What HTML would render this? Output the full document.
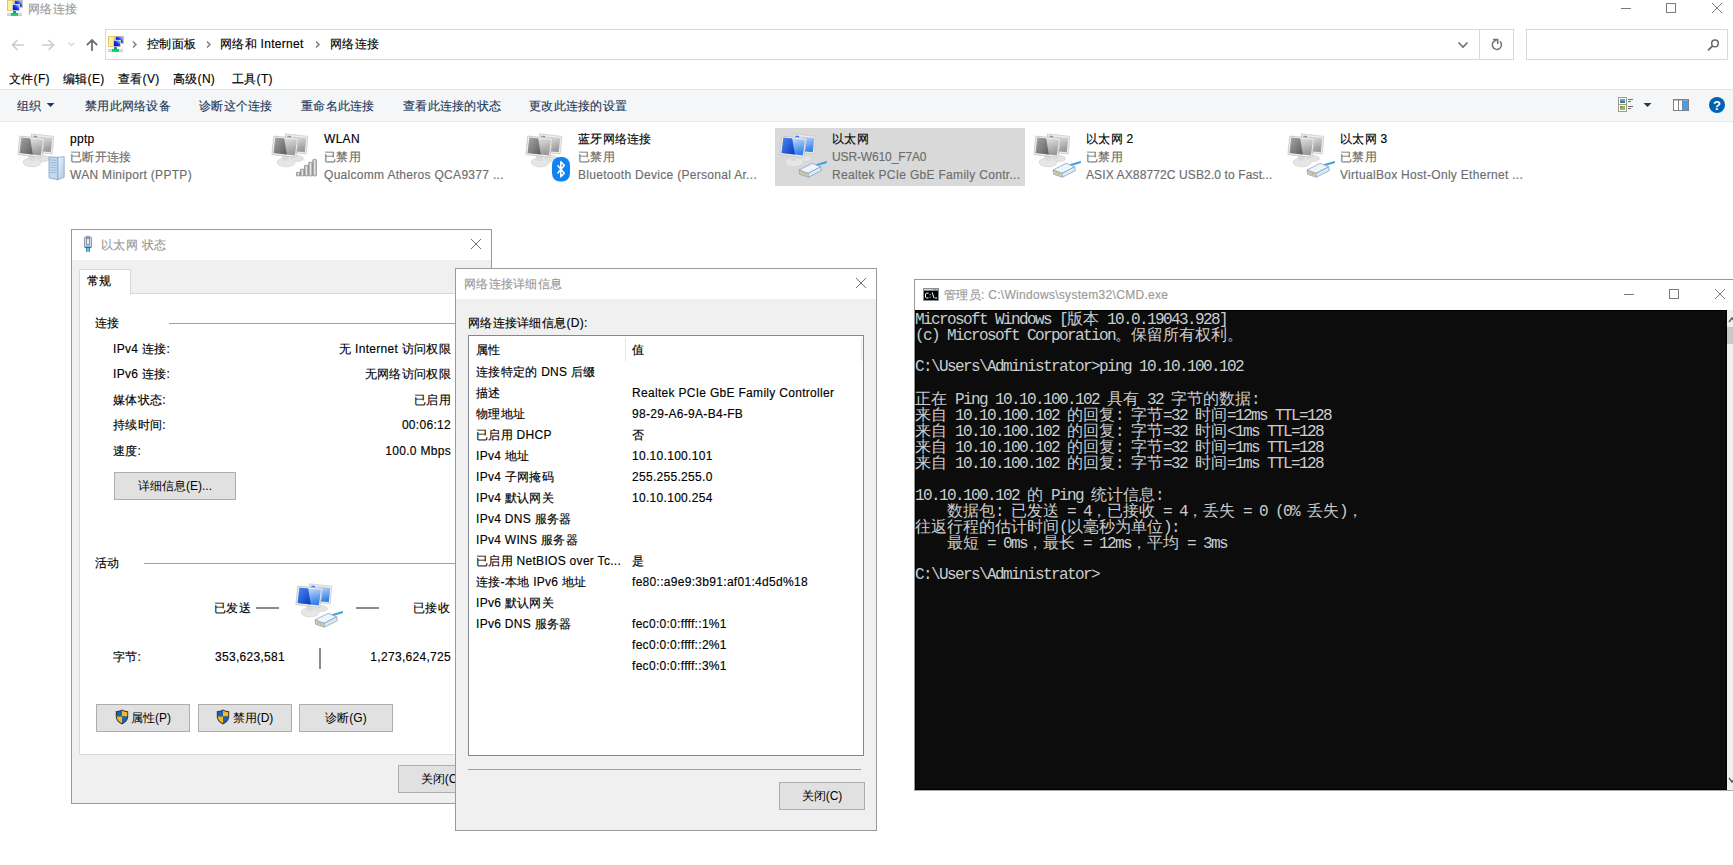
<!DOCTYPE html>
<html><head><meta charset="utf-8">
<style>
html,body{margin:0;padding:0}
body{width:1733px;height:865px;overflow:hidden;background:#fff;position:relative;font-family:"Liberation Sans",sans-serif;font-size:12px;color:#000}
.a{position:absolute}
.t{position:absolute;white-space:nowrap;line-height:18px;height:18px;letter-spacing:0.3px;-webkit-text-stroke:0.15px currentColor}
.g{color:#6d6d6d}
.box{position:absolute;box-sizing:border-box}
.btn{position:absolute;box-sizing:border-box;background:#e1e1e1;border:1px solid #adadad;text-align:center;line-height:27px;white-space:nowrap}
.hl{position:absolute;height:1px;background:#a0a0a0}
.cmd{position:absolute;left:915px;white-space:pre;font-family:"Liberation Mono",monospace;font-size:16px;line-height:16px;height:16px;color:#cccccc;letter-spacing:-1.6px}
.cmd b{font-weight:normal;font-family:"Liberation Sans",sans-serif;font-size:16px;letter-spacing:0}
</style></head><body>

<svg width="0" height="0" style="position:absolute">
<defs>
<linearGradient id="gdk" x1="0" y1="0" x2="1" y2="1"><stop offset="0" stop-color="#a8a8a8"/><stop offset="1" stop-color="#5c5c5c"/></linearGradient>
<linearGradient id="glt" x1="0" y1="0" x2="0.4" y2="1"><stop offset="0" stop-color="#f2f2f2"/><stop offset="1" stop-color="#9c9c9c"/></linearGradient>
<linearGradient id="gdkb" x1="0" y1="0" x2="1" y2="1"><stop offset="0" stop-color="#4a8cf0"/><stop offset="1" stop-color="#0838c0"/></linearGradient>
<linearGradient id="gltb" x1="0" y1="0" x2="0.4" y2="1"><stop offset="0" stop-color="#e6f2ff"/><stop offset="1" stop-color="#3a82ea"/></linearGradient>
<linearGradient id="gsrv" x1="0" y1="0" x2="1" y2="1">
<stop offset="0" stop-color="#eef5fc"/><stop offset="1" stop-color="#a9c6e4"/>
</linearGradient>
<linearGradient id="gbar" x1="0" y1="0" x2="1" y2="0">
<stop offset="0" stop-color="#9a9a9a"/><stop offset="0.5" stop-color="#e8e8e8"/><stop offset="1" stop-color="#a8a8a8"/>
</linearGradient>
<symbol id="pcs" viewBox="0 0 56 56">
<ellipse cx="29" cy="30.5" rx="6.5" ry="3" fill="#e4e4e4" stroke="#cfcfcf" stroke-width="0.6"/>
<polygon points="17.5,5.8 39.8,8.4 38.2,25.9 17,24" fill="#eeeeee" stroke="#c4c4c4" stroke-width="0.7"/>
<polygon points="19.3,7.6 38.2,9.9 36.8,24.2 19,22.5" fill="url(#glt)"/>
<polygon points="19.3,7.6 23,8 24,22.9 19,22.5" fill="url(#gdk)"/>
<ellipse cx="18.1" cy="34.3" rx="9" ry="4.6" fill="#e6e6e6" stroke="#d0d0d0" stroke-width="0.6"/>
<polygon points="14,27 21,28 20.5,33 14.5,32.5" fill="#dadada"/>
<polygon points="5.8,8.1 30.4,10.4 27.8,29.4 3.9,26.5" fill="#f0f0f0" stroke="#c2c2c2" stroke-width="0.8"/>
<polygon points="7.3,9.6 29,11.8 26.9,27.6 5.6,25.1" fill="url(#glt)"/>
<polygon points="7.3,9.6 16.2,10.5 18.8,26.4 5.6,25.1" fill="url(#gdk)"/>
</symbol>
<symbol id="pcb" viewBox="0 0 56 56">
<ellipse cx="29" cy="30.5" rx="6.5" ry="3" fill="#e4e4e4" stroke="#cfcfcf" stroke-width="0.6"/>
<polygon points="17.5,5.8 39.8,8.4 38.2,25.9 17,24" fill="#eeeeee" stroke="#c4c4c4" stroke-width="0.7"/>
<polygon points="19.3,7.6 38.2,9.9 36.8,24.2 19,22.5" fill="url(#gltb)"/>
<polygon points="19.3,7.6 23,8 24,22.9 19,22.5" fill="url(#gdkb)"/>
<ellipse cx="18.1" cy="34.3" rx="9" ry="4.6" fill="#e6e6e6" stroke="#d0d0d0" stroke-width="0.6"/>
<polygon points="14,27 21,28 20.5,33 14.5,32.5" fill="#dadada"/>
<polygon points="5.8,8.1 30.4,10.4 27.8,29.4 3.9,26.5" fill="#f0f0f0" stroke="#c2c2c2" stroke-width="0.8"/>
<polygon points="7.3,9.6 29,11.8 26.9,27.6 5.6,25.1" fill="url(#gltb)"/>
<polygon points="7.3,9.6 16.2,10.5 18.8,26.4 5.6,25.1" fill="url(#gdkb)"/>
</symbol>
<symbol id="srv" viewBox="0 0 56 56">
<polygon points="35,28.8 44,29.3 44,51.8 35,49.8" fill="#c4daf0" stroke="#6f93b8" stroke-width="0.7"/>
<polygon points="44,29.3 50.2,28.6 50.2,49.2 44,51.8" fill="url(#gsrv)" stroke="#7fa0c4" stroke-width="0.7"/>
<g stroke="#7f9fc0" stroke-width="0.6"><line x1="36.5" y1="32" x2="42.5" y2="32.3"/><line x1="36.5" y1="34.5" x2="42.5" y2="34.8"/><line x1="36.5" y1="37" x2="42.5" y2="37.3"/><line x1="36.5" y1="39.5" x2="42.5" y2="39.8"/><line x1="36.5" y1="42" x2="42.5" y2="42.3"/><line x1="36.5" y1="44.5" x2="42.5" y2="44.8"/></g>
</symbol>
<symbol id="plug" viewBox="0 0 56 56">
<line x1="41" y1="37" x2="50" y2="34.2" stroke="#3fa3dc" stroke-width="2.2" stroke-linecap="round"/>
<polygon points="23,42 36.2,35.3 44.7,38.8 32,45.4" fill="#eef4fb" stroke="#7d9ab8" stroke-width="0.7"/>
<polygon points="23,42 32,45.4 32.4,49.2 23.6,46.3" fill="#cfe0f0" stroke="#7d9ab8" stroke-width="0.7"/>
<polygon points="32,45.4 44.7,38.8 45.3,42.7 32.4,49.2" fill="#dce9f6" stroke="#7d9ab8" stroke-width="0.7"/>
<g stroke="#c9a52a" stroke-width="0.8"><line x1="25" y1="43.5" x2="25.2" y2="46"/><line x1="26.6" y1="44.1" x2="26.8" y2="46.6"/><line x1="28.2" y1="44.7" x2="28.4" y2="47.2"/><line x1="29.8" y1="45.2" x2="30" y2="47.8"/></g>
</symbol>
<symbol id="bars" viewBox="0 0 56 56">
<g fill="url(#gbar)" stroke="#777" stroke-width="0.6">
<rect x="28.4" y="44.3" width="3.6" height="3.6" rx="0.6"/>
<rect x="32.5" y="41.1" width="3.6" height="6.8" rx="0.6"/>
<rect x="36.6" y="37.3" width="3.6" height="10.6" rx="0.6"/>
<rect x="40.7" y="34.3" width="3.6" height="13.6" rx="0.6"/>
<rect x="44.8" y="31.4" width="3.6" height="16.5" rx="0.6"/>
</g>
</symbol>
<symbol id="bt" viewBox="0 0 56 56">
<rect x="30" y="29" width="18" height="24.5" rx="8" fill="#0f83f0"/>
<path d="M35.5,37.2 L42.3,45.3 L38.8,48.8 L38.8,33.8 L42.3,37.3 L35.5,45.5" fill="none" stroke="#fff" stroke-width="1.6" stroke-linejoin="round"/>
</symbol>
<symbol id="netico" viewBox="0 0 16 16">
<linearGradient id="gnb" x1="0" y1="1" x2="1" y2="0"><stop offset="0" stop-color="#0000c8"/><stop offset="0.55" stop-color="#1a3cf0"/><stop offset="1" stop-color="#c8dcff"/></linearGradient>
<rect x="0" y="0" width="6.8" height="10.9" fill="#e8c25a"/>
<rect x="1" y="0.8" width="4.6" height="9.2" fill="#fbf0a8"/>
<rect x="6.9" y="0" width="9" height="7.8" fill="#b8b8b8"/>
<rect x="8" y="0.9" width="6.8" height="5.8" fill="url(#gnb)"/>
<rect x="5" y="3.9" width="7.9" height="7.2" fill="#d4d4d4"/>
<rect x="5.9" y="4.8" width="6.1" height="5.4" fill="url(#gnb)"/>
<rect x="0" y="12.9" width="15" height="1.2" fill="#d0d4d6"/>
<rect x="0" y="14.6" width="15" height="1.2" fill="#b8bcbe"/>
<rect x="6" y="11.1" width="3" height="2.2" fill="#109850"/>
<rect x="3.9" y="13" width="7.1" height="2.8" fill="#00d070"/>
</symbol>
<symbol id="shield" viewBox="0 0 14 16">
<path d="M7,0.6 C9,1.8 11.2,2.3 13.2,2.3 L13.2,7.5 C13.2,11 10.5,13.8 7,15.4 C3.5,13.8 0.8,11 0.8,7.5 L0.8,2.3 C2.8,2.3 5,1.8 7,0.6 Z" fill="#3a3a3a"/>
<path d="M7,1.6 C8.8,2.6 10.6,3.1 12.2,3.2 L12.2,7.5 L7,7.5 Z" fill="#f5b923"/>
<path d="M7,1.6 C5.2,2.6 3.4,3.1 1.8,3.2 L1.8,7.5 L7,7.5 Z" fill="#1565c0"/>
<path d="M1.8,7.5 L7,7.5 L7,14.3 C4,12.9 1.8,10.5 1.8,7.5 Z" fill="#f5b923"/>
<path d="M12.2,7.5 L7,7.5 L7,14.3 C10,12.9 12.2,10.5 12.2,7.5 Z" fill="#1565c0"/>
</symbol>
</defs>
</svg>

<!-- ================= EXPLORER ================= -->
<div class="box" style="left:775px;top:128px;width:250px;height:58px;background:#d9d9d9"></div>
<!-- icons row -->
<svg class="a" style="left:14px;top:128px" width="56" height="56"><use href="#pcs"/><use href="#srv"/></svg>
<svg class="a" style="left:268px;top:128px" width="56" height="56"><use href="#pcs"/><use href="#bars"/></svg>
<svg class="a" style="left:522px;top:128px" width="56" height="56"><use href="#pcs"/><use href="#bt"/></svg>
<svg class="a" style="left:776px;top:128px" width="56" height="56"><use href="#pcb"/><use href="#plug"/></svg>
<svg class="a" style="left:1030px;top:128px" width="56" height="56"><use href="#pcs"/><use href="#plug"/></svg>
<svg class="a" style="left:1284px;top:128px" width="56" height="56"><use href="#pcs"/><use href="#plug"/></svg>
<!-- title icon -->
<svg class="a" style="left:7px;top:0px" width="16" height="16"><use href="#netico"/></svg>
<svg class="a" style="left:108px;top:36px" width="16" height="16"><use href="#netico"/></svg>
<!-- window controls -->
<svg class="a" style="left:1600px;top:0px" width="133" height="20">
<g stroke="#7a7a7a" stroke-width="1" fill="none" shape-rendering="crispEdges">
<line x1="21" y1="8.5" x2="31" y2="8.5"/>
<rect x="66.5" y="3.5" width="9" height="9"/>
</g>
<g stroke="#7a7a7a" stroke-width="1" fill="none"><line x1="112" y1="3" x2="122" y2="13"/><line x1="122" y1="3" x2="112" y2="13"/></g>
</svg>
<!-- nav arrows -->
<svg class="a" style="left:0px;top:30px" width="240" height="30">
<g fill="none" stroke-width="1.3">
<path d="M12.5,15 H24 M17.5,10 L12.5,15 L17.5,20" stroke="#cdcdcd" stroke-width="1.7"/>
<path d="M42,15 H53.5 M48.5,10 L53.5,15 L48.5,20" stroke="#cdcdcd" stroke-width="1.7"/>
<path d="M68.5,12.5 L71.5,15.5 L74.5,12.5" stroke="#d6d6d6"/>
<path d="M92,21 V10 M86.8,15.2 L92,10 L97.2,15.2" stroke="#6f6f6f" stroke-width="1.8"/>
<path d="M133,11.5 L136,14.5 L133,17.5" stroke="#7a7a7a" stroke-width="1.4"/>
<path d="M207,11.5 L210,14.5 L207,17.5" stroke="#7a7a7a" stroke-width="1.4"/>
</g>
</svg>
<svg class="a" style="left:300px;top:30px" width="30" height="30"><path d="M16,11.5 L19,14.5 L16,17.5" fill="none" stroke="#7a7a7a" stroke-width="1.4"/></svg>
<svg class="a" style="left:1450px;top:30px" width="60" height="30">
<path d="M8.5,12.5 L13,17 L17.5,12.5" fill="none" stroke="#6f6f6f" stroke-width="1.6"/>
<path d="M49.9,11.3 A4.6,4.6 0 1 1 46.6,10.2" fill="none" stroke="#737373" stroke-width="1.5"/>
<path d="M43,9.5 H47.7 V14" fill="none" stroke="#737373" stroke-width="1.5"/>
</svg>
<svg class="a" style="left:1700px;top:30px" width="27" height="29">
<circle cx="15" cy="13.4" r="3.3" fill="none" stroke="#6a6a6a" stroke-width="1.5"/>
<line x1="12.6" y1="15.8" x2="8" y2="20.4" stroke="#6a6a6a" stroke-width="1.8"/>
</svg>
<!-- title bar -->
<div class="t" style="left:28px;top:0px;color:#999">网络连接</div>

<!-- address row -->
<div class="box" style="left:105px;top:29px;width:1409px;height:31px;border:1px solid #d9d9d9"></div>
<div class="box" style="left:1479px;top:30px;width:1px;height:29px;background:#d9d9d9"></div>
<div class="box" style="left:1526px;top:29px;width:202px;height:31px;border:1px solid #d9d9d9"></div>
<div class="t" style="left:147px;top:35px">控制面板</div>
<div class="t" style="left:220px;top:35px">网络和 Internet</div>
<div class="t" style="left:330px;top:35px">网络连接</div>

<!-- menu -->
<div class="t" style="left:9px;top:70px">文件(F)</div>
<div class="t" style="left:63px;top:70px">编辑(E)</div>
<div class="t" style="left:118px;top:70px">查看(V)</div>
<div class="t" style="left:173px;top:70px">高级(N)</div>
<div class="t" style="left:232px;top:70px">工具(T)</div>

<!-- toolbar -->
<div class="box" style="left:0;top:89px;width:1733px;height:33px;background:#f5f6f7;border-top:1px solid #e3e3e3;border-bottom:1px solid #e8e8e8"></div>
<div class="t" style="left:17px;top:97px;color:#1e395b">组织</div>
<div class="t" style="left:85px;top:97px;color:#1e395b">禁用此网络设备</div>
<div class="t" style="left:199px;top:97px;color:#1e395b">诊断这个连接</div>
<div class="t" style="left:301px;top:97px;color:#1e395b">重命名此连接</div>
<div class="t" style="left:403px;top:97px;color:#1e395b">查看此连接的状态</div>
<div class="t" style="left:529px;top:97px;color:#1e395b">更改此连接的设置</div>

<!-- toolbar icons -->
<svg class="a" style="left:40px;top:98px" width="20" height="14"><path d="M6.7,5 H14.5 L10.6,9 Z" fill="#1e395b"/></svg>
<svg class="a" style="left:1610px;top:92px" width="123" height="28">
<rect x="8.5" y="5.5" width="8" height="7" fill="#fff" stroke="#9a9a9a"/>
<rect x="10" y="7" width="5" height="4" fill="#5fa0d8"/><rect x="10" y="9" width="5" height="2" fill="#3f8a4a"/>
<rect x="8.5" y="12.5" width="8" height="7" fill="#fff" stroke="#9a9a9a"/>
<rect x="10" y="14" width="5" height="4" fill="#8fc060"/><rect x="10" y="14" width="2" height="2" fill="#e06030"/>
<g stroke="#6a6a6a" stroke-width="1"><line x1="18" y1="7.5" x2="23" y2="7.5"/><line x1="18" y1="9.5" x2="21" y2="9.5"/><line x1="18" y1="14.5" x2="23" y2="14.5"/><line x1="18" y1="16.5" x2="21" y2="16.5"/></g>
<path d="M33.5,11 H41.5 L37.5,15 Z" fill="#1e395b"/>
<rect x="63.5" y="7.5" width="15" height="11" fill="#fff" stroke="#808080"/>
<rect x="63" y="7" width="16" height="1.5" fill="#808080"/>
<rect x="68" y="8" width="1" height="10" fill="#808080"/><rect x="72" y="8" width="1" height="10" fill="#808080"/>
<rect x="72.5" y="8.5" width="5.5" height="9.5" fill="#4a9de0"/>
<circle cx="107" cy="13" r="8" fill="#0063b1"/>
<text x="107" y="17.5" text-anchor="middle" font-family="Liberation Sans" font-weight="bold" font-size="13" fill="#fff">?</text>
</svg>

<!-- items -->
<div class="t" style="left:70px;top:130px">pptp</div>
<div class="t g" style="left:70px;top:148px">已断开连接</div>
<div class="t g" style="left:70px;top:166px">WAN Miniport (PPTP)</div>
<div class="t" style="left:324px;top:130px">WLAN</div>
<div class="t g" style="left:324px;top:148px">已禁用</div>
<div class="t g" style="left:324px;top:166px">Qualcomm Atheros QCA9377 ...</div>
<div class="t" style="left:578px;top:130px">蓝牙网络连接</div>
<div class="t g" style="left:578px;top:148px">已禁用</div>
<div class="t g" style="left:578px;top:166px">Bluetooth Device (Personal Ar...</div>
<div class="t" style="left:832px;top:130px">以太网</div>
<div class="t g" style="left:832px;top:148px;letter-spacing:-0.13px">USR-W610_F7A0</div>
<div class="t g" style="left:832px;top:166px">Realtek PCIe GbE Family Contr...</div>
<div class="t" style="left:1086px;top:130px">以太网 2</div>
<div class="t g" style="left:1086px;top:148px">已禁用</div>
<div class="t g" style="left:1086px;top:166px;letter-spacing:0.12px">ASIX AX88772C USB2.0 to Fast...</div>
<div class="t" style="left:1340px;top:130px">以太网 3</div>
<div class="t g" style="left:1340px;top:148px">已禁用</div>
<div class="t g" style="left:1340px;top:166px">VirtualBox Host-Only Ethernet ...</div>

<!-- STATUS_DIALOG -->
<div class="box" style="left:71px;top:229px;width:421px;height:575px;border:1px solid #9a9a9a;background:#f0f0f0"></div>
<div class="box" style="left:72px;top:230px;width:419px;height:30px;background:#fff"></div>
<div class="t" style="left:101px;top:236px;color:#999">以太网 状态</div>
<svg class="a" style="left:76px;top:230px" width="24" height="26">
<rect x="10.5" y="6.3" width="3" height="1.6" fill="#fff" stroke="#8090a6" stroke-width="0.9"/>
<rect x="8.6" y="7.6" width="6.8" height="9.4" fill="#e4ecf6" stroke="#7f8fa5" stroke-width="1"/>
<rect x="9.2" y="14.5" width="5.6" height="2.2" fill="#b4daf2"/>
<rect x="10.6" y="8.7" width="2.8" height="5.8" fill="#f4f7fb" stroke="#6f7f95" stroke-width="0.9"/>
<rect x="9.2" y="16.7" width="5.6" height="1.1" fill="#3e4a5c"/>
<rect x="10" y="17.8" width="1.6" height="4" fill="#1a92cc"/>
<rect x="12.4" y="17.8" width="1.6" height="4" fill="#1a92cc"/>
</svg>
<svg class="a" style="left:466px;top:234px" width="20" height="20"><g stroke="#707070" stroke-width="1"><line x1="5" y1="5" x2="15" y2="15"/><line x1="15" y1="5" x2="5" y2="15"/></g></svg>
<!-- tab -->
<div class="box" style="left:79px;top:293px;width:390px;height:462px;background:#fff;border:1px solid #d9d9d9"></div>
<div class="box" style="left:79px;top:269px;width:52px;height:26px;background:#fff;border:1px solid #d9d9d9;border-bottom:none"></div>
<div class="t" style="left:87px;top:272px">常规</div>
<div class="t" style="left:95px;top:314px">连接</div>
<div class="hl" style="left:169px;top:323px;width:300px"></div>
<div class="t" style="left:113px;top:340px">IPv4 连接:</div>
<div class="t" style="left:113px;top:365px">IPv6 连接:</div>
<div class="t" style="left:113px;top:391px">媒体状态:</div>
<div class="t" style="left:113px;top:416px">持续时间:</div>
<div class="t" style="left:113px;top:442px">速度:</div>
<div class="t" style="right:1282px;top:340px">无 Internet 访问权限</div>
<div class="t" style="right:1282px;top:365px">无网络访问权限</div>
<div class="t" style="right:1282px;top:391px">已启用</div>
<div class="t" style="right:1282px;top:416px">00:06:12</div>
<div class="t" style="right:1282px;top:442px">100.0 Mbps</div>
<div class="btn" style="left:114px;top:472px;width:122px;height:28px">详细信息(E)...</div>
<div class="t" style="left:95px;top:554px">活动</div>
<div class="hl" style="left:144px;top:563px;width:325px"></div>
<div class="t" style="left:214px;top:599px">已发送</div>
<div class="hl" style="left:256px;top:607px;width:23px;height:2px;background:#8c8c8c"></div>
<div class="hl" style="left:356px;top:607px;width:23px;height:2px;background:#8c8c8c"></div>
<div class="t" style="left:413px;top:599px">已接收</div>
<svg class="a" style="left:292px;top:578px" width="56" height="56"><use href="#pcb"/><use href="#plug"/></svg>
<div class="t" style="left:113px;top:648px">字节:</div>
<div class="t" style="left:215px;top:648px">353,623,581</div>
<div class="box" style="left:318.5px;top:648px;width:2px;height:21px;background:#8c8c8c"></div>
<div class="t" style="right:1282px;top:648px">1,273,624,725</div>
<div class="btn" style="left:96px;top:704px;width:94px;height:28px;padding-left:16px">属性(P)</div>
<svg class="a" style="left:115px;top:709px" width="14" height="16"><use href="#shield"/></svg>
<div class="btn" style="left:198px;top:704px;width:94px;height:28px;padding-left:16px">禁用(D)</div>
<svg class="a" style="left:216px;top:709px" width="14" height="16"><use href="#shield"/></svg>
<div class="btn" style="left:299px;top:704px;width:94px;height:28px">诊断(G)</div>
<div class="btn" style="left:398px;top:765px;width:86px;height:28px">关闭(C)</div>

<!-- DETAILS_DIALOG -->
<div class="box" style="left:455px;top:268px;width:422px;height:563px;border:1px solid #9a9a9a;background:#f0f0f0"></div>
<div class="box" style="left:456px;top:269px;width:420px;height:30px;background:#fff"></div>
<div class="t" style="left:464px;top:275px;color:#999">网络连接详细信息</div>
<svg class="a" style="left:851px;top:273px" width="20" height="20"><g stroke="#707070" stroke-width="1"><line x1="5" y1="5" x2="15" y2="15"/><line x1="15" y1="5" x2="5" y2="15"/></g></svg>
<div class="t" style="left:468px;top:314px">网络连接详细信息(D):</div>
<div class="box" style="left:468px;top:335px;width:396px;height:421px;background:#fff;border:1px solid #828790"></div>
<div class="box" style="left:625px;top:338px;width:1px;height:23px;background:#e5e5e5"></div>
<div class="box" style="left:861px;top:338px;width:1px;height:23px;background:#e5e5e5"></div>
<div class="t" style="left:476px;top:341px">属性</div>
<div class="t" style="left:632px;top:341px">值</div>
<div class="t" style="left:476px;top:363px">连接特定的 DNS 后缀</div>
<div class="t" style="left:476px;top:384px">描述</div>
<div class="t" style="left:632px;top:384px">Realtek PCIe GbE Family Controller</div>
<div class="t" style="left:476px;top:405px">物理地址</div>
<div class="t" style="left:632px;top:405px">98-29-A6-9A-B4-FB</div>
<div class="t" style="left:476px;top:426px">已启用 DHCP</div>
<div class="t" style="left:632px;top:426px">否</div>
<div class="t" style="left:476px;top:447px">IPv4 地址</div>
<div class="t" style="left:632px;top:447px">10.10.100.101</div>
<div class="t" style="left:476px;top:468px">IPv4 子网掩码</div>
<div class="t" style="left:632px;top:468px">255.255.255.0</div>
<div class="t" style="left:476px;top:489px">IPv4 默认网关</div>
<div class="t" style="left:632px;top:489px">10.10.100.254</div>
<div class="t" style="left:476px;top:510px">IPv4 DNS 服务器</div>
<div class="t" style="left:476px;top:531px">IPv4 WINS 服务器</div>
<div class="t" style="left:476px;top:552px">已启用 NetBIOS over Tc...</div>
<div class="t" style="left:632px;top:552px">是</div>
<div class="t" style="left:476px;top:573px">连接-本地 IPv6 地址</div>
<div class="t" style="left:632px;top:573px">fe80::a9e9:3b91:af01:4d5d%18</div>
<div class="t" style="left:476px;top:594px">IPv6 默认网关</div>
<div class="t" style="left:476px;top:615px">IPv6 DNS 服务器</div>
<div class="t" style="left:632px;top:615px">fec0:0:0:ffff::1%1</div>
<div class="t" style="left:632px;top:636px">fec0:0:0:ffff::2%1</div>
<div class="t" style="left:632px;top:657px">fec0:0:0:ffff::3%1</div>
<div class="hl" style="left:468px;top:769px;width:393px"></div>
<div class="btn" style="left:779px;top:782px;width:86px;height:28px">关闭(C)</div>

<!-- CMD -->
<div class="box" style="left:914px;top:279px;width:819px;height:512px;border-top:1px solid #9a9a9a;border-left:1px solid #9a9a9a;border-bottom:1px solid #a8a8a8;background:#fff"></div>
<div class="box" style="left:915px;top:310px;width:812px;height:480px;background:#0c0c0c;border:1px solid #000"></div>
<div class="box" style="left:1727px;top:310px;width:6px;height:480px;background:#f0f0f0"></div>
<svg class="a" style="left:1727px;top:314px" width="6" height="12"><path d="M2,8 L5,4 L8,8" fill="none" stroke="#606060" stroke-width="1.5"/></svg>
<svg class="a" style="left:1727px;top:774px" width="6" height="12"><path d="M2,4 L5,8 L8,4" fill="none" stroke="#606060" stroke-width="1.5"/></svg>
<div class="t" style="left:944px;top:286px;color:#999">管理员: C:\Windows\system32\CMD.exe</div>
<svg class="a" style="left:923px;top:288px" width="16" height="13">
<rect x="0.5" y="0.5" width="15" height="12" fill="#000" stroke="#8a8f96"/><rect x="1" y="1" width="14" height="1.6" fill="#cdd3da"/>
<rect x="10.5" y="1.2" width="0.8" height="0.8" fill="#506070"/><rect x="12.2" y="1.2" width="0.8" height="0.8" fill="#506070"/><rect x="13.9" y="1.2" width="0.8" height="0.8" fill="#506070"/>
<path d="M5.5,5.2 H3.3 L2.5,6 V9.2 L3.3,10 H5.5" fill="none" stroke="#fff" stroke-width="1"/>
<rect x="6.7" y="6.2" width="1" height="1" fill="#fff"/><rect x="6.7" y="8.7" width="1" height="1" fill="#fff"/>
<path d="M9.2,4.5 L11,10.2" stroke="#fff" stroke-width="1"/>
<rect x="11.8" y="9.5" width="2.4" height="1" fill="#fff"/>
</svg>
<svg class="a" style="left:1610px;top:280px" width="123" height="30">
<g stroke="#7a7a7a" stroke-width="1" fill="none" shape-rendering="crispEdges">
<line x1="14" y1="14.5" x2="24" y2="14.5"/>
<rect x="59.5" y="9.5" width="9" height="9"/>
</g>
<g stroke="#7a7a7a" stroke-width="1" fill="none"><line x1="105" y1="9" x2="115" y2="19"/><line x1="115" y1="9" x2="105" y2="19"/></g>
</svg>
<div class="box" style="left:1727px;top:327px;width:6px;height:17px;background:#c8c8c8"></div>
<div class="cmd" style="top:311px">Microsoft Windows [<b>版本</b> 10.0.19043.928]</div>
<div class="cmd" style="top:327px">(c) Microsoft Corporation<b>。保留所有权利。</b></div>
<div class="cmd" style="top:359px">C:\Users\Administrator&gt;ping 10.10.100.102</div>
<div class="cmd" style="top:391px"><b>正在</b> Ping 10.10.100.102 <b>具有</b> 32 <b>字节的数据</b>:</div>
<div class="cmd" style="top:407px"><b>来自</b> 10.10.100.102 <b>的回复</b>: <b>字节</b>=32 <b>时间</b>=12ms TTL=128</div>
<div class="cmd" style="top:423px"><b>来自</b> 10.10.100.102 <b>的回复</b>: <b>字节</b>=32 <b>时间</b>&lt;1ms TTL=128</div>
<div class="cmd" style="top:439px"><b>来自</b> 10.10.100.102 <b>的回复</b>: <b>字节</b>=32 <b>时间</b>=1ms TTL=128</div>
<div class="cmd" style="top:455px"><b>来自</b> 10.10.100.102 <b>的回复</b>: <b>字节</b>=32 <b>时间</b>=1ms TTL=128</div>
<div class="cmd" style="top:487px">10.10.100.102 <b>的</b> Ping <b>统计信息</b>:</div>
<div class="cmd" style="top:503px">    <b>数据包</b>: <b>已发送</b> = 4<b>，已接收</b> = 4<b>，丢失</b> = 0 (0% <b>丢失</b>)<b>，</b></div>
<div class="cmd" style="top:519px"><b>往返行程的估计时间</b>(<b>以毫秒为单位</b>):</div>
<div class="cmd" style="top:535px">    <b>最短</b> = 0ms<b>，最长</b> = 12ms<b>，平均</b> = 3ms</div>
<div class="cmd" style="top:567px">C:\Users\Administrator&gt;</div>

</body></html>
